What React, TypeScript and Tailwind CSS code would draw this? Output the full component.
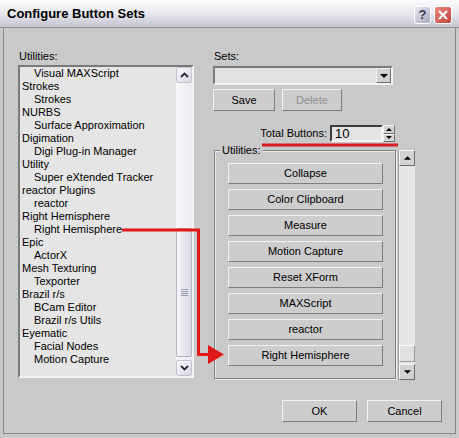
import React from 'react';

const FONT = { fontFamily: '"Liberation Sans", Arial, sans-serif' };

const utilityItems: [string, boolean][] = [
  ['Visual MAXScript', true],
  ['Strokes', false],
  ['Strokes', true],
  ['NURBS', false],
  ['Surface Approximation', true],
  ['Digimation', false],
  ['Digi Plug-in Manager', true],
  ['Utility', false],
  ['Super eXtended Tracker', true],
  ['reactor Plugins', false],
  ['reactor', true],
  ['Right Hemisphere', false],
  ['Right Hemisphere', true],
  ['Epic', false],
  ['ActorX', true],
  ['Mesh Texturing', false],
  ['Texporter', true],
  ['Brazil r/s', false],
  ['BCam Editor', true],
  ['Brazil r/s Utils', true],
  ['Eyematic', false],
  ['Facial Nodes', true],
  ['Motion Capture', true],
];

const setButtons = [
  'Collapse',
  'Color Clipboard',
  'Measure',
  'Motion Capture',
  'Reset XForm',
  'MAXScript',
  'reactor',
  'Right Hemisphere',
];

function Chevron({ up }: { up?: boolean }) {
  return (
    <svg width="9" height="6" viewBox="0 0 9 6">
      <polyline
        points={up ? '1,5 4.5,1.5 8,5' : '1,1 4.5,4.5 8,1'}
        fill="none"
        stroke="#2a2a3a"
        strokeWidth="1.8"
      />
    </svg>
  );
}

function Tri({ up, size = 7 }: { up?: boolean; size?: number }) {
  return (
    <svg width={size} height={Math.ceil(size / 2)} viewBox="0 0 8 4">
      <polygon points={up ? '0,4 4,0 8,4' : '0,0 8,0 4,4'} fill="#000" />
    </svg>
  );
}

function XpArrow({ up }: { up?: boolean }) {
  return (
    <div className="h-[16px] w-[16px] flex items-center justify-center rounded-[2px] border border-[#c3c3d0] bg-gradient-to-br from-[#fbfbfd] to-[#d6d6e2]">
      <Chevron up={up} />
    </div>
  );
}

function Button({ children, w, disabled }: { children: React.ReactNode; w: string; disabled?: boolean }) {
  return (
    <div
      className={`${w} h-full flex items-center justify-center border border-t-[#f2f2f2] border-l-[#f2f2f2] border-r-[#7c7c7c] border-b-[#7c7c7c] bg-[#cdcdcd] text-[11px] ${
        disabled ? 'text-[#8e8e8e]' : 'text-black'
      }`}
    >
      {children}
    </div>
  );
}

function ClassicArrow({ up }: { up?: boolean }) {
  return (
    <div className="h-[16px] w-full flex items-center justify-center border border-t-[#f4f4f4] border-l-[#f4f4f4] border-r-[#707070] border-b-[#707070] bg-[#d2d2d2]">
      <Tri up={up} />
    </div>
  );
}

export default function App() {
  return (
    <div className="relative w-[459px] h-[438px] bg-[#c9c9c9] flex flex-col overflow-hidden" style={FONT}>
      {/* title bar */}
      <div className="h-[28px] shrink-0 flex items-center justify-between pl-[7px] pr-[7px] border-b border-[#8f8f98] bg-gradient-to-b from-[#fdfdfe] via-[#e8e8ee] to-[#c4c4d0]">
        <span className="text-[13px] font-bold text-black">Configure Button Sets</span>
        <div className="flex gap-[3px] mt-[2px]">
          <div className="w-[17px] h-[18px] rounded-[3px] border border-white bg-gradient-to-br from-[#e8e8f2] to-[#a9a9c0] flex items-center justify-center text-[13px] font-bold text-[#3a3a4c] leading-none">
            ?
          </div>
          <div className="w-[18px] h-[18px] rounded-[3px] border border-white bg-gradient-to-br from-[#ec8a80] to-[#c0403a] flex items-center justify-center">
            <svg width="10" height="10" viewBox="0 0 10 10">
              <path d="M1 1 L9 9 M9 1 L1 9" stroke="#fff" strokeWidth="2" />
            </svg>
          </div>
        </div>
      </div>

      {/* body */}
      <div className="flex-1 mx-[3px] mb-[4px] border-x border-b border-[#888888] flex flex-col pt-[22px] pl-[14px] text-[11px] text-black">
        <div className="flex h-[330px]">
          {/* left column */}
          <div className="w-[176px] flex flex-col">
            <div className="h-[13px] leading-[13px] pl-[1px]">Utilities:</div>
            <div className="mt-[2px] h-[313px] flex border-2 border-t-[#7a7a7a] border-l-[#7a7a7a] border-r-[#f4f4f4] border-b-[#f4f4f4] bg-[#e5e5e5]">
              <div className="flex-1 flex flex-col overflow-hidden">
                {utilityItems.map(([label, child], i) => (
                  <div key={i} className={`h-[13px] leading-[13px] whitespace-nowrap ${child ? 'pl-[14px]' : 'pl-[2px]'}`}>
                    {label}
                  </div>
                ))}
              </div>
              <div className="w-[16px] flex flex-col bg-gradient-to-r from-[#f8f8fa] to-[#ececf2]">
                <XpArrow up />
                <div className="flex-1 flex flex-col justify-end pb-[3px]">
                  <div className="h-[129px] rounded-[2px] border border-[#b4b4c4] bg-gradient-to-r from-[#f6f6fa] to-[#d8d8e4] flex items-center justify-center">
                    <div className="flex flex-col gap-[1px]">
                      <div className="w-[7px] h-[1px] bg-[#9a9aae]" />
                      <div className="w-[7px] h-[1px] bg-[#9a9aae]" />
                      <div className="w-[7px] h-[1px] bg-[#9a9aae]" />
                      <div className="w-[7px] h-[1px] bg-[#9a9aae]" />
                    </div>
                  </div>
                </div>
                <XpArrow />
              </div>
            </div>
          </div>

          {/* right column */}
          <div className="ml-[19px] w-[202px] flex flex-col">
            <div className="h-[13px] leading-[13px] pl-[1px]">Sets:</div>
            <div className="mt-[3px] w-[180px] h-[19px] flex border-2 border-t-[#7a7a7a] border-l-[#7a7a7a] border-r-[#f4f4f4] border-b-[#f4f4f4] bg-[#e2e2e2]">
              <div className="flex-1" />
              <div className="w-[15px] h-full flex items-center justify-center border border-t-[#f4f4f4] border-l-[#f4f4f4] border-r-[#707070] border-b-[#707070] bg-[#d2d2d2]">
                <Tri size={8} />
              </div>
            </div>
            <div className="mt-[4px] h-[22px] flex gap-[7px]">
              <Button w="w-[62px]">Save</Button>
              <Button w="w-[60px]" disabled>
                Delete
              </Button>
            </div>
            <div className="mt-[14px] h-[17px] flex items-center justify-end pr-[20px]">
              <span className="mr-[3px]">Total Buttons:</span>
              <div className="w-[53px] h-[17px] flex items-center pl-[3px] border-2 border-t-[#3c3c3c] border-l-[#3c3c3c] border-r-[#f4f4f4] border-b-[#f4f4f4] bg-[#e4e4e4] text-[13px] leading-none">
                10
              </div>
              <div className="w-[12px] h-[17px] flex flex-col">
                <div className="flex-1 flex items-center justify-center border border-t-[#f4f4f4] border-l-[#f4f4f4] border-r-[#707070] border-b-[#707070] bg-[#d2d2d2]">
                  <Tri up size={6} />
                </div>
                <div className="flex-1 flex items-center justify-center border border-t-[#f4f4f4] border-l-[#f4f4f4] border-r-[#707070] border-b-[#707070] bg-[#d2d2d2]">
                  <Tri size={6} />
                </div>
              </div>
            </div>

            <div className="mt-[8px] h-[230px] flex">
              <div className="relative ml-[1px] w-[182px] h-[229px] border border-[#808080] shadow-[inset_1px_1px_0_#ededed,1px_1px_0_#ededed] flex flex-col gap-[5px] pt-[12px] pl-[13px]">
                <span className="absolute -top-[7px] left-[5px] px-[2px] bg-[#c9c9c9] leading-[13px]">Utilities:</span>
                {setButtons.map((b) => (
                  <div key={b} className="h-[21px] shrink-0">
                    <Button w="w-[155px]">{b}</Button>
                  </div>
                ))}
              </div>
              <div className="ml-[2px] w-[17px] h-[230px] flex flex-col border-l border-[#a0a0a0]">
                <ClassicArrow up />
                <div className="flex-1 flex flex-col justify-end pb-[2px] bg-[#e6e6e6]">
                  <div className="h-[17px] border border-t-[#fafafa] border-l-[#fafafa] border-r-[#9a9a9a] border-b-[#9a9a9a] bg-[#e0e0e0]" />
                </div>
                <ClassicArrow />
              </div>
            </div>
          </div>
        </div>

        {/* footer */}
        <div className="mt-[20px] h-[22px] flex justify-end gap-[10px] pr-[13px]">
          <Button w="w-[75px]">OK</Button>
          <Button w="w-[75px]">Cancel</Button>
        </div>
      </div>

      {/* red annotations */}
      <svg className="absolute inset-0 pointer-events-none" width="459" height="438" viewBox="0 0 459 438">
        <line x1="262" y1="145" x2="398" y2="145" stroke="#d81c22" strokeWidth="3" />
        <polyline points="122,230 198.5,230 198.5,354.5 210,354.5" fill="none" stroke="#e01818" strokeWidth="3" />
        <polygon points="208,345 224,354.5 208,364" fill="#e01818" />
      </svg>
    </div>
  );
}
